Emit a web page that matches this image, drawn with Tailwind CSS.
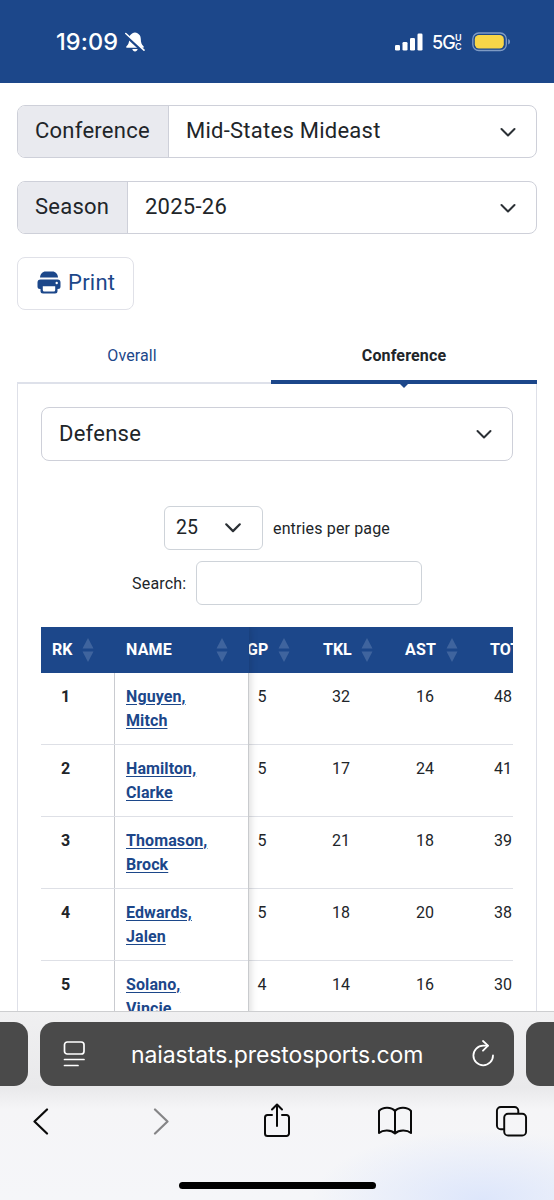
<!DOCTYPE html>
<html lang="en">
  <head>
    <meta charset="utf-8" />
    <script src="https://cdn.jsdelivr.net/npm/@tailwindcss/browser@4"></script>
    <title>Mid-States Mideast Defense Stats</title>
  </head>
  <body class="bg-white">
    <div class="w-[554px] h-[1200px] flex flex-col overflow-hidden font-['Roboto',sans-serif] text-[#212529]">
      <!-- Status bar -->
      <header class="h-[83px] shrink-0 bg-[#1c478a] text-white flex justify-between pl-[56px] pr-[43px] font-['Inter',sans-serif]">
        <div class="flex h-[83px] items-center gap-[4px]">
          <span class="text-[23.500px] font-medium w-[65px] whitespace-nowrap tracking-[0.1px]">19:09</span>
          <svg class="w-[20px] h-[22px]" viewBox="0 0 20 22" fill="none">
            <path d="M10 1.500c-3.800.6-5.800 3-5.800 6.500 0 4-1 5.500-2.700 7.200-.6.700-.3 1.600.6 1.600h15.800c.9 0 1.200-.9.6-1.600-1.700-1.700-2.700-3.200-2.700-7.200 0-3.500-2-5.900-5.800-6.500z" fill="#fff" />
            <path d="M7.300 18h5.400c-.4 1.500-1.300 2.500-2.700 2.500S7.700 19.500 7.300 18z" fill="#fff" />
            <path d="M.5 4.300l17 15.500" stroke="#1c478a" stroke-width="3" />
            <path d="M.8 2.500l18.200 16.600" stroke="#fff" stroke-width="1.600" stroke-linecap="round" />
          </svg>
        </div>
        <div class="flex h-[83px] items-center">
          <svg class="w-[29px] h-[18px]" viewBox="0 0 29 18" fill="#fff">
            <rect x="0" y="12" width="5" height="5.500" rx="1.300" />
            <rect x="7.500" y="9" width="5" height="8.500" rx="1.300" />
            <rect x="15" y="5" width="5" height="12.500" rx="1.300" />
            <rect x="22.500" y="0.500" width="5" height="17" rx="1.300" />
          </svg>
          <span class="ml-[8px] pt-px text-[18px] font-medium w-[23px] tracking-[-1px]">5G</span>
          <span class="flex flex-col text-[9px] leading-[9px] font-semibold w-[8px]"><span>U</span><span>C</span></span>
          <svg class="ml-[9px] w-[39px] h-[20px]" viewBox="0 0 39 20" fill="none">
            <rect x="0.800" y="1" width="33.500" height="17.500" rx="6" stroke="#7f9bc4" stroke-width="1.300" />
            <rect x="2.800" y="3" width="29" height="13.500" rx="4.200" fill="#f8d648" />
            <path d="M36.200 7v5.500c1.200-.5 1.800-1.500 1.800-2.800s-.6-2.200-1.800-2.700z" fill="#7f9bc4" />
          </svg>
        </div>
      </header>

      <main class="h-[928px] shrink-0 px-[17px] pt-[22px] overflow-hidden flex flex-col">
        <!-- Filters -->
        <div class="h-[53px] shrink-0 flex rounded-[8px] border border-[#ced0d9] overflow-hidden text-[22px] tracking-[0.25px]">
          <label class="w-[151px] bg-[#e9eaef] border-r border-[#ced0d9] pl-[17px] flex items-center pb-[2px]">Conference</label>
          <div class="flex-1 flex items-center justify-between pl-[17px] pr-[19px] pb-[2px]">
            <span>Mid-States Mideast</span>
            <svg class="w-[18px] h-[18px] mt-[2px]" viewBox="0 0 18 18" fill="none" stroke="#2b3035" stroke-width="2" stroke-linecap="round" stroke-linejoin="round"><path d="M2.500 6l6.500 6.500L15.500 6" /></svg>
          </div>
        </div>
        <div class="mt-[23px] h-[53px] shrink-0 flex rounded-[8px] border border-[#ced0d9] overflow-hidden text-[22px] tracking-[0.25px]">
          <label class="w-[110px] bg-[#e9eaef] border-r border-[#ced0d9] pl-[17px] flex items-center pb-[2px]">Season</label>
          <div class="flex-1 flex items-center justify-between pl-[17px] pr-[19px] pb-[2px]">
            <span>2025-26</span>
            <svg class="w-[18px] h-[18px] mt-[2px]" viewBox="0 0 18 18" fill="none" stroke="#2b3035" stroke-width="2" stroke-linecap="round" stroke-linejoin="round"><path d="M2.500 6l6.500 6.500L15.500 6" /></svg>
          </div>
        </div>
        <button class="mt-[23px] w-[117px] h-[53px] shrink-0 flex items-center rounded-[8px] border border-[#e0e1e8] pl-[19px] pb-[2px] text-[22px] tracking-[0.25px] text-[#1c478a]">
          <svg class="w-[24px] h-[23px] mr-[7px]" viewBox="0 0 24 23">
            <path d="M3 6.500C3.300 3 5.500.5 8.500.5h7c3 0 5.200 2.500 5.500 6z" fill="#1c478a" />
            <path d="M3.500 8.500h17a3 3 0 0 1 3 3v4a2.500 2.500 0 0 1-2.500 2.500h-.5v2a2.500 2.500 0 0 1-2.500 2.500H6A2.500 2.500 0 0 1 3.500 20v-2H3a2.500 2.500 0 0 1-2.500-2.500v-4a3 3 0 0 1 3-3z" fill="#1c478a" />
            <path d="M5.800 15.300h12.400v3.600a1.500 1.500 0 0 1-1.500 1.500H7.300a1.500 1.500 0 0 1-1.500-1.500z" fill="#fff" />
            <circle cx="19.700" cy="12" r="1.200" fill="#fff" />
          </svg>
          Print
        </button>

        <!-- Tabs -->
        <nav class="mt-[20px] h-[54px] shrink-0 flex items-end text-[16px]">
          <a class="w-[254px] h-[52px] border-b-2 border-[#dee1ea] text-[#1c478a] flex justify-center pt-[12px] pr-[24px] tracking-[0.1px]">Overall</a>
          <a class="relative w-[266px] h-[54px] border-b-[4px] border-[#1c478a] text-[#212529] font-bold flex justify-center pt-[14px] tracking-[0.15px]">
            Conference
            <svg class="absolute left-[128px] top-[52px] w-[10px] h-[6px]" viewBox="0 0 10 6" fill="#1c478a"><path d="M0 1h10L5 6z" /></svg>
          </a>
        </nav>

        <section class="flex-1 border-x border-[#dee0e8] px-[23px] pt-[23px]">
          <div class="h-[54px] flex items-center justify-between rounded-[8px] border border-[#ced0d9] pl-[17px] pr-[19px] pb-px text-[22px] tracking-[0.25px]">
            <span>Defense</span>
            <svg class="w-[18px] h-[18px]" viewBox="0 0 18 18" fill="none" stroke="#2b3035" stroke-width="2" stroke-linecap="round" stroke-linejoin="round"><path d="M2.500 6l6.500 6.500L15.500 6" /></svg>
          </div>

          <div class="mt-[45px] flex items-center pl-[123px]">
            <div class="w-[99px] h-[44px] flex items-center justify-between rounded-[6px] border border-[#ced3d9] pl-[11px] pr-[20px] text-[19.500px]">
              <span>25</span>
              <svg class="w-[18px] h-[18px]" viewBox="0 0 18 18" fill="none" stroke="#2b3035" stroke-width="2.200" stroke-linecap="round" stroke-linejoin="round"><path d="M2.200 5.300l6.800 6.800 6.800-6.800" /></svg>
            </div>
            <span class="ml-[10px] pt-[2px] text-[16px] tracking-[0.15px]">entries per page</span>
          </div>
          <div class="mt-[11px] flex items-center pl-[91px]">
            <span class="w-[64px] pt-[2px] text-[16px] tracking-[0.2px]">Search:</span>
            <div class="w-[226px] h-[44px] rounded-[6px] border border-[#ced3d9]"></div>
          </div>

          <!-- Stats table: frozen RK and NAME columns, scrolled stat columns -->
          <div class="mt-[22px] w-[472px] flex overflow-hidden text-[16px] leading-[24px]">
            <div class="w-[208px] shrink-0 relative z-10 bg-white border-r border-[#c9cbce] shadow-[1px_0_8px_rgba(0,0,0,0.16)]">
              <div class="h-[46px] -mr-px bg-[#1c478a] text-white font-bold flex items-center">
                <div class="w-[73px] pl-[11px] flex items-center gap-[8px]"><span class="w-[22px]">RK</span><svg class="w-[12px] h-[24px]" viewBox="0 0 12 24" fill="#3f649e"><path d="M6 0l5.500 10.500H.5zM6 24l5.500-10.500H.5z" /></svg></div>
                <div class="flex-1 pl-[12px] pr-[21px] flex items-center justify-between"><span class="tracking-[0.2px]">NAME</span><svg class="w-[12px] h-[24px]" viewBox="0 0 12 24" fill="#3f649e"><path d="M6 0l5.500 10.500H.5zM6 24l5.500-10.500H.5z" /></svg></div>
              </div>
              <div id="frozenRows" class="font-bold"></div>
            </div>
            <div class="flex-1 overflow-hidden">
              <div class="w-[315px] -ml-[24px]">
                <div class="h-[46px] bg-[#1c478a] text-white font-bold flex items-center">
                  <div class="w-[74px] pl-[22px] flex items-center gap-[8px]"><span class="w-[23px]">GP</span><svg class="w-[12px] h-[24px]" viewBox="0 0 12 24" fill="#3f649e"><path d="M6 0l5.500 10.500H.5zM6 24l5.500-10.500H.5z" /></svg></div>
                  <div class="w-[84px] pl-[24px] flex items-center gap-[8px]"><span class="w-[30px]">TKL</span><svg class="w-[12px] h-[24px]" viewBox="0 0 12 24" fill="#3f649e"><path d="M6 0l5.500 10.500H.5zM6 24l5.500-10.500H.5z" /></svg></div>
                  <div class="w-[84px] pl-[22px] flex items-center gap-[9px]"><span class="w-[32px] tracking-[0.2px]">AST</span><svg class="w-[12px] h-[24px]" viewBox="0 0 12 24" fill="#3f649e"><path d="M6 0l5.500 10.500H.5zM6 24l5.500-10.500H.5z" /></svg></div>
                  <div class="w-[73px] pl-[23px]">TOT</div>
                </div>
                <div id="statRows"></div>
              </div>
            </div>
          </div>
        </section>
      </main>

      <!-- Browser toolbar -->
      <footer class="relative z-20 flex-1 border-t border-[#cdced0] bg-[radial-gradient(ellipse_170px_70px_at_87%_100%,#dde6fb,transparent),linear-gradient(to_bottom,#f0f0f1,#e9e9eb_40%,#f5f5f7_52%,#f5f6f9)] flex flex-col">
        <div class="mt-[10px] h-[64px] shrink-0 flex gap-[12px] text-white">
          <div class="w-[28px] shrink-0 rounded-r-[14px] bg-[#4a4a4a]"></div>
          <div class="w-[474px] shrink-0 rounded-[14px] bg-[#4a4a4a] flex items-center pl-[23px] pr-[19px]">
            <svg class="w-[23px] h-[28px]" viewBox="0 0 23 28" fill="none" stroke="#fff" stroke-width="1.700" stroke-linecap="round">
              <rect x="1.500" y="2" width="19.500" height="12" rx="2.800" />
              <path d="M1.500 19.500h19.500M1.500 25.500h13.500" />
            </svg>
            <span class="ml-[45px] pt-[2px] flex-1 whitespace-nowrap font-['Inter',sans-serif] text-[23px] tracking-[-0.1px]">naiastats.prestosports.com</span>
            <svg class="w-[24px] h-[28px]" viewBox="0 0 24 28" fill="none" stroke="#fff" stroke-width="1.800" stroke-linecap="round" stroke-linejoin="round">
              <path d="M22 15.500A9.800 9.800 0 1 1 12.200 5.700h4.500" />
              <path d="M12 1l5 4.700-5 5" />
            </svg>
          </div>
          <div class="w-[28px] shrink-0 rounded-l-[14px] bg-[#4a4a4a]"></div>
        </div>
        <div class="mt-[15px] h-[40px] shrink-0 flex items-center pl-[32px]">
          <svg class="w-[18px] h-[28px]" viewBox="0 0 18 28" fill="none" stroke="#0a0a0a" stroke-width="2.200" stroke-linecap="round" stroke-linejoin="round"><path d="M15 2.500L2.500 14.500 15 26.500" /></svg>
          <svg class="ml-[102px] w-[18px] h-[28px]" viewBox="0 0 18 28" fill="none" stroke="#858587" stroke-width="2.200" stroke-linecap="round" stroke-linejoin="round"><path d="M3 2.500l12.500 12L3 26.500" /></svg>
          <svg class="ml-[93px] w-[28px] h-[36px]" viewBox="0 0 28 36" fill="none" stroke="#0a0a0a" stroke-width="2" stroke-linecap="round" stroke-linejoin="round">
            <path d="M9 12H4.500A2.500 2.500 0 0 0 2 14.500v16A2.500 2.500 0 0 0 4.500 33h19a2.500 2.500 0 0 0 2.500-2.500v-16a2.500 2.500 0 0 0-2.500-2.500H19" />
            <path d="M14 23V2M9 6.500L14 1.500l5 5" />
          </svg>
          <svg class="ml-[86px] w-[36px] h-[30px]" viewBox="0 0 36 30" fill="none" stroke="#0a0a0a" stroke-width="2" stroke-linejoin="round">
            <path d="M18 5C14.500 1 6 .5 2 5v22c4-3.300 12-3.300 16 .5 4-3.800 12-3.800 16-.5V5C30 .5 21.500 1 18 5zM18 5v22.500" />
          </svg>
          <svg class="ml-[82px] w-[33px] h-[33px]" viewBox="0 0 34 34" fill="none" stroke="#0a0a0a" stroke-width="2">
            <path d="M9.500 25H6a4 4 0 0 1-4-4V6a4 4 0 0 1 4-4h14a4 4 0 0 1 4 4v3" />
            <rect x="9.500" y="9" width="22.500" height="22.500" rx="4" />
          </svg>
        </div>
        <div class="mt-[41px] ml-[179px] w-[197px] h-[7px] shrink-0 rounded-full bg-black"></div>
      </footer>
    </div>

    <script>
      const players = [
        ["Nguyen,", "Mitch", 5, 32, 16, 48],
        ["Hamilton,", "Clarke", 5, 17, 24, 41],
        ["Thomason,", "Brock", 5, 21, 18, 39],
        ["Edwards,", "Jalen", 5, 18, 20, 38],
        ["Solano,", "Vincie", 4, 14, 16, 30],
      ];
      document.getElementById("frozenRows").innerHTML = players
        .map(
          (p, i) => `
          <div class="h-[72px] flex border-b border-[#dee0e6]">
            <div class="w-[74px] border-r border-[#c9cbd0] pt-[12px] pr-[24px] text-right"><span class="inline-block w-[49px] text-center">${i + 1}</span></div>
            <div class="pt-[12px] pl-[11px] text-[#1c478a] tracking-[0.1px] underline underline-offset-2">${p[0]}<br />${p[1]}</div>
          </div>`
        )
        .join("");
      document.getElementById("statRows").innerHTML = players
        .map(
          (p) => `
          <div class="h-[72px] flex border-b border-[#dee0e6] pt-[12px] text-center">
            <div class="w-[74px]">${p[2]}</div>
            <div class="w-[84px]">${p[3]}</div>
            <div class="w-[84px]">${p[4]}</div>
            <div class="w-[72px]">${p[5]}</div>
          </div>`
        )
        .join("");
    </script>
  </body>
</html>
